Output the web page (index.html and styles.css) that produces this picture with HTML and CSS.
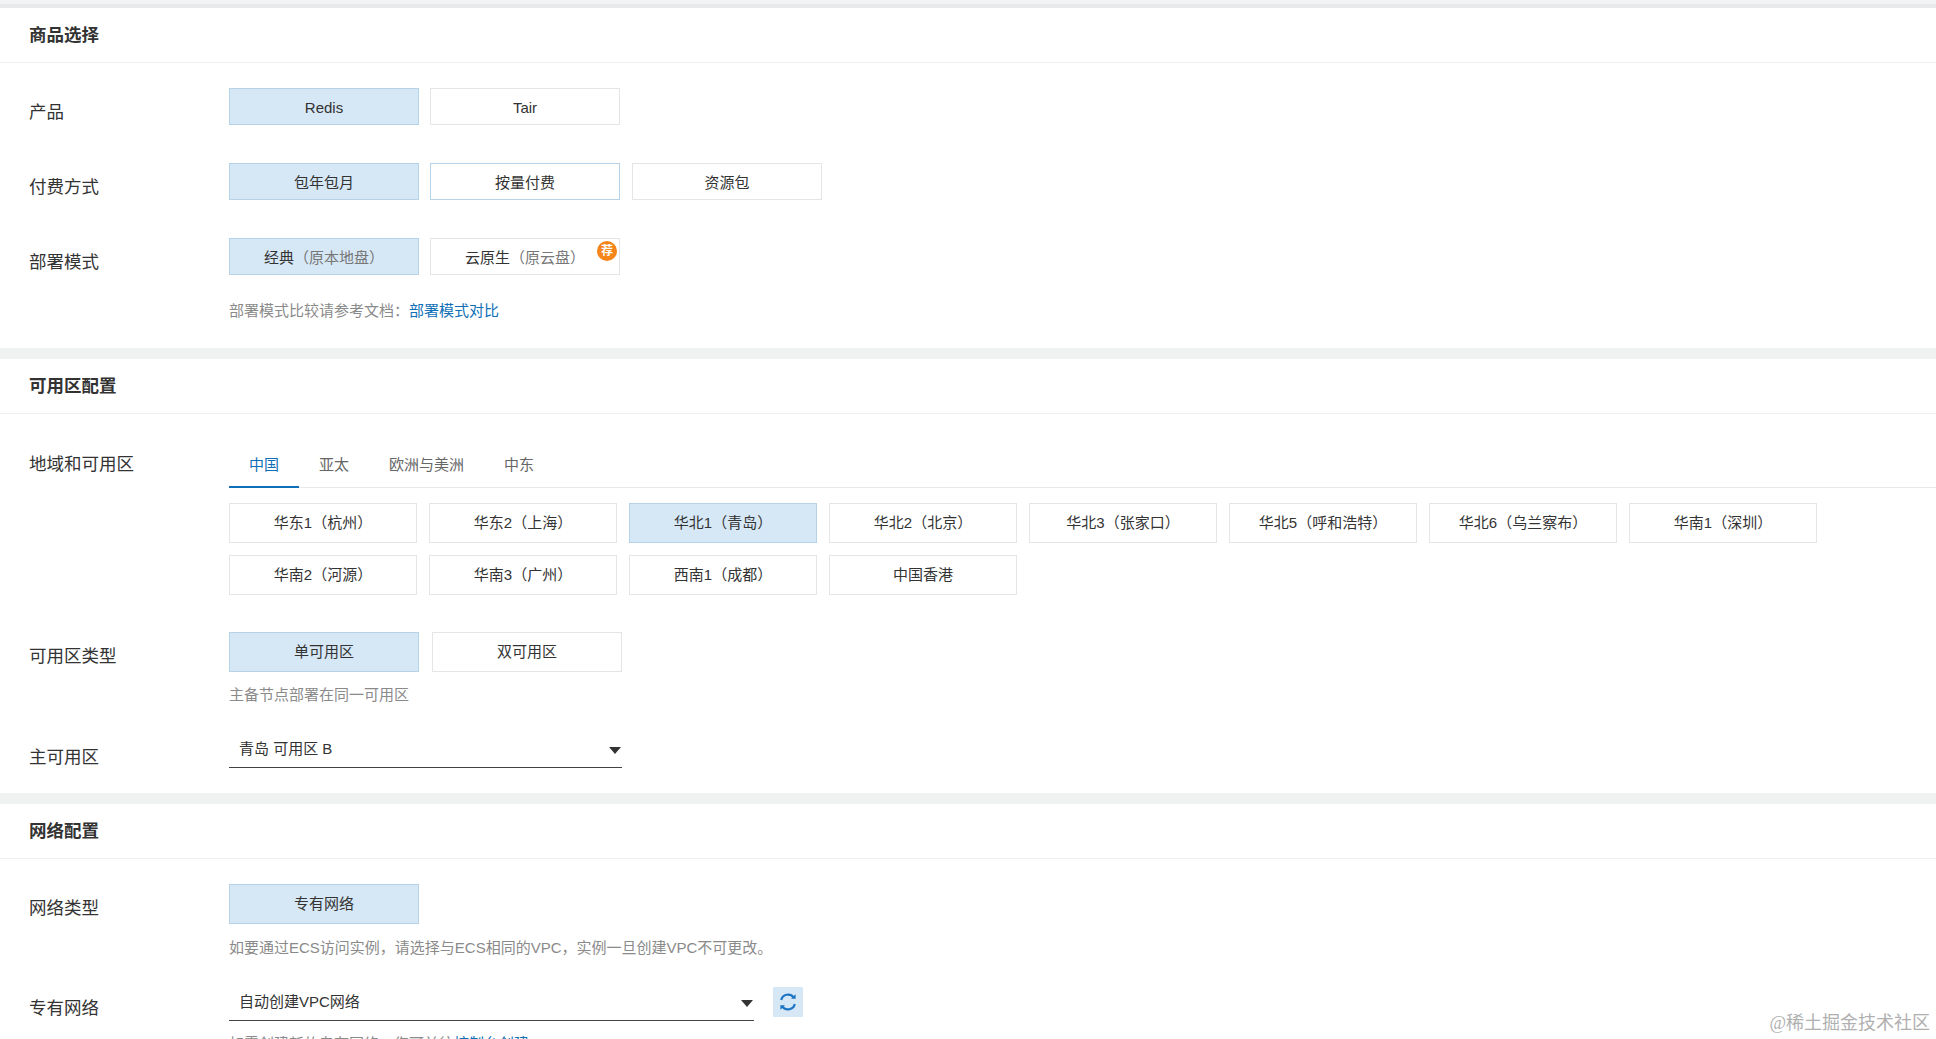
FILE: index.html
```html
<!DOCTYPE html>
<html lang="zh-CN">
<head>
    <meta charset="UTF-8">
    <title>商品选择</title>
    <link rel="stylesheet" href="styles.css">
</head>
<body>
    <div class="topstrip"></div>

    <section class="panel panel-first">
        <div class="panel-head">商品选择</div>
        <div class="panel-body">
            <div class="row row-product">
                <div class="label">产品</div>
                <div class="options">
                    <div class="btn btn-short selected">Redis</div>
                    <div class="btn btn-short">Tair</div>
                </div>
            </div>
            <div class="row row-product">
                <div class="label">付费方式</div>
                <div class="options options-pay">
                    <div class="btn btn-short selected">包年包月</div>
                    <div class="btn btn-short hovered">按量付费</div>
                    <div class="btn btn-short">资源包</div>
                </div>
            </div>
            <div class="row">
                <div class="label">部署模式</div>
                <div class="options">
                    <div class="btn btn-short selected">经典<span class="muted">（原本地盘）</span></div>
                    <div class="btn btn-short">云原生<span class="muted">（原云盘）</span><span class="badge">荐</span></div>
                </div>
            </div>
            <div class="hint hint-deploy">部署模式比较请参考文档：<a class="link">部署模式对比</a></div>
        </div>
    </section>

    <section class="panel panel-zone">
        <div class="panel-head">可用区配置</div>
        <div class="panel-body">
            <div class="row">
                <div class="label label-tabs">地域和可用区</div>
                <div class="content">
                    <div class="tabs">
                        <div class="tab active">中国</div>
                        <div class="tab">亚太</div>
                        <div class="tab">欧洲与美洲</div>
                        <div class="tab">中东</div>
                    </div>
                    <div class="regions">
                        <div class="btn">华东1（杭州）</div>
                        <div class="btn">华东2（上海）</div>
                        <div class="btn selected">华北1（青岛）</div>
                        <div class="btn">华北2（北京）</div>
                        <div class="btn">华北3（张家口）</div>
                        <div class="btn">华北5（呼和浩特）</div>
                        <div class="btn">华北6（乌兰察布）</div>
                        <div class="btn">华南1（深圳）</div>
                        <div class="btn">华南2（河源）</div>
                        <div class="btn">华南3（广州）</div>
                        <div class="btn">西南1（成都）</div>
                        <div class="btn">中国香港</div>
                    </div>
                </div>
            </div>
            <div class="row row-type">
                <div class="label">可用区类型</div>
                <div class="options options-wide">
                    <div class="btn btn-tall selected">单可用区</div>
                    <div class="btn btn-tall">双可用区</div>
                </div>
            </div>
            <div class="hint hint-type">主备节点部署在同一可用区</div>
            <div class="row row-select">
                <div class="label label-zone">主可用区</div>
                <div class="select select-zone">青岛 可用区 B<i class="caret"></i></div>
            </div>
        </div>
    </section>

    <section class="panel">
        <div class="panel-head">网络配置</div>
        <div class="panel-body">
            <div class="row">
                <div class="label">网络类型</div>
                <div class="options">
                    <div class="btn btn-tall selected">专有网络</div>
                </div>
            </div>
            <div class="hint hint-net">如要通过ECS访问实例，请选择与ECS相同的VPC，实例一旦创建VPC不可更改。</div>
            <div class="row row-vpc">
                <div class="label label-vpc">专有网络</div>
                <div class="select select-vpc">自动创建VPC网络<i class="caret"></i></div>
                <div class="refresh">
                    <svg width="20" height="20" viewBox="0 0 20 20" fill="none" stroke="#1c75c4" stroke-width="2.2">
                        <path d="M3.2 8a7 7 0 0 1 12.4-2.6"/>
                        <path d="M16.8 12a7 7 0 0 1-12.4 2.6"/>
                        <path d="M17.6 2.2v4.6h-4.6z" fill="#1c75c4" stroke="none"/>
                        <path d="M2.4 17.8v-4.6h4.6z" fill="#1c75c4" stroke="none"/>
                    </svg>
                </div>
            </div>
            <div class="hint hint-vpc">如需创建新的专有网络，您可前往<a class="link">控制台创建</a></div>
        </div>
    </section>

    <div class="watermark">@稀土掘金技术社区</div>
</body>
</html>
```

FILE: styles.css
```css
html, body{
    height: 100%;
    margin: 0;
    overflow: hidden;
}

body{
    background-color: #fff;
    color: #333;
    font-family: "Liberation Sans", "Noto Sans CJK SC", sans-serif;
    font-size: 15px;
}

.topstrip{
    height: 4px;
    background-color: #f2f3f4;
    border-bottom: 4px solid #e8e9eb;
}

.panel{
    border-bottom: 11px solid #f0f1f1;
}

.panel-head{
    height: 54px;
    line-height: 54px;
    padding-left: 29px;
    border-bottom: 1px solid #eeeeee;
    font-size: 17.5px;
    font-weight: 700;
}

.panel-body{
    padding: 25px 0;
}

.panel-first .panel-body{
    padding-bottom: 27px;
}

.panel-zone .panel-body{
    padding-top: 28px;
}

.row{
    display: flex;
}

.row-product{
    margin-bottom: 38px;
}

.label{
    flex: none;
    box-sizing: border-box;
    width: 229px;
    height: 37px;
    padding: 11px 0 0 29px;
    font-size: 17.5px;
    line-height: 26px;
}

.label-tabs{
    padding-top: 9px;
}

.label-zone{
    padding-top: 16px;
}

.label-vpc{
    padding-top: 14px;
}

.content{
    flex: 1;
}

.options{
    display: flex;
    gap: 11px;
}

.options-pay .btn:last-child{
    margin-left: 1px;
}

.options-wide{
    gap: 13px;
}

.btn{
    position: relative;
    box-sizing: border-box;
    width: 188px;
    height: 40px;
    line-height: 38px;
    text-align: center;
    white-space: nowrap;
    background-color: #fff;
    border: 1px solid #e4e5e6;
}

.btn-short{
    width: 190px;
    height: 37px;
    line-height: 37px;
}

.btn-tall{
    width: 190px;
}

.selected{
    background-color: #d6e7f5;
    border-color: #b4d2e8;
}

.hovered{
    border-color: #b4d2e8;
}

.muted{
    color: #777;
}

.badge{
    position: absolute;
    top: 2px;
    right: 2px;
    width: 20px;
    height: 20px;
    border-radius: 50%;
    background-color: #f5851b;
    color: #fff;
    font-size: 12px;
    font-weight: 700;
    line-height: 20px;
}

.hint{
    margin-left: 229px;
    color: #8a8a8a;
    line-height: 20px;
}

.hint-deploy{
    margin-top: 26px;
}

.hint-type{
    margin-top: 13px;
}

.hint-net{
    margin-top: 14px;
}

.hint-vpc{
    margin-top: 13px;
}

.link{
    color: #0f70b7;
}

.tabs{
    display: flex;
    height: 45px;
    border-bottom: 1px solid #e8e8e8;
}

.tab{
    box-sizing: border-box;
    height: 46px;
    padding: 0 20px;
    line-height: 45px;
    color: #666;
}

.tab.active{
    color: #0f70b7;
    border-bottom: 2px solid #0f70b7;
}

.regions{
    display: grid;
    grid-template-columns: repeat(8, 188px);
    column-gap: 12px;
    row-gap: 12px;
    margin-top: 15px;
}

.row-type{
    margin-top: 37px;
}

.row-select{
    margin-top: 23px;
}

.row-vpc{
    margin-top: 23px;
}

.select{
    position: relative;
    box-sizing: border-box;
    height: 40px;
    padding-left: 10px;
    line-height: 41px;
    border-bottom: 1px solid #444;
}

.select-zone{
    width: 393px;
}

.select-vpc{
    width: 525px;
}

.caret{
    position: absolute;
    top: 19px;
    right: 1px;
    border-left: 6px solid transparent;
    border-right: 6px solid transparent;
    border-top: 7px solid #333;
}

.refresh{
    display: flex;
    align-items: center;
    justify-content: center;
    width: 30px;
    height: 30px;
    margin: 6px 0 0 19px;
    background-color: #d6e7f5;
}

.watermark{
    position: absolute;
    right: 6px;
    bottom: 4px;
    color: #b0b0b0;
    font-family: "Liberation Serif", "Noto Sans CJK SC", serif;
    font-size: 18px;
    line-height: 24px;
}
```
